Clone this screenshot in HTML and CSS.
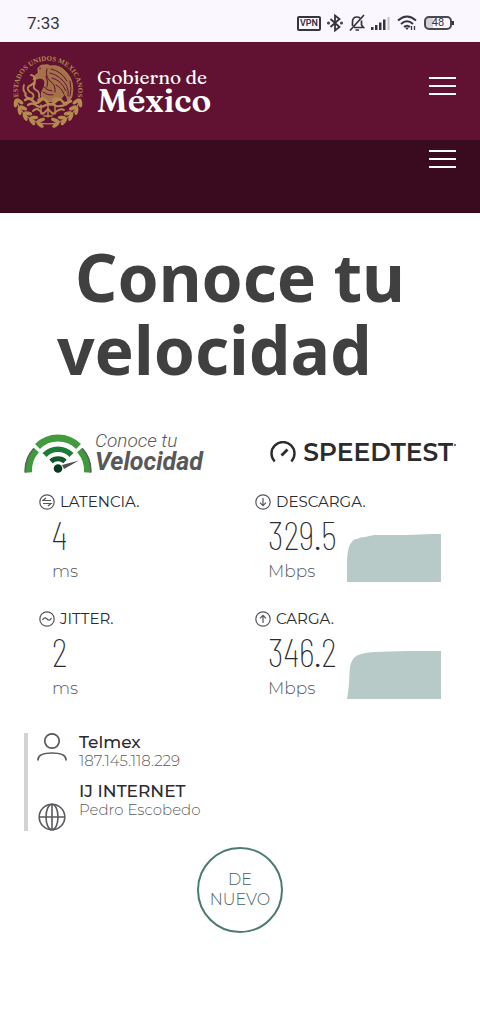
FILE: index.html
```html
<!DOCTYPE html>
<html lang="es">
<head>
<meta charset="utf-8">
<meta name="viewport" content="width=device-width, initial-scale=1">
<title>Conoce tu velocidad</title>
<link rel="stylesheet" href="styles.css">
</head>
<body>
<div class="status">
  <span class="clock">7:33</span>
  <div class="status-icons">
    <span class="vpn">VPN</span>
    <svg width="16" height="18" viewBox="0 0 16 18" fill="none" stroke="#37343b" stroke-width="1.8"><path d="M3.500 5l9 8L8 16.500V1.500L12.500 5l-9 8"/><circle cx="1.500" cy="9" r=".6"/><circle cx="14.500" cy="9" r=".6"/></svg>
    <svg width="16" height="18" viewBox="0 0 16 18" fill="none" stroke="#37343b" stroke-width="1.700"><path d="M15 1L1 16.500M3.500 12V8c0-3 1.500-5 4.500-5 1.200 0 2.200.4 3 1M12.500 6.500V11l2 2.500H5M6.500 16h3.500"/></svg>
    <svg width="20" height="14" viewBox="0 0 20 14" fill="#37343b"><rect x="0" y="11" width="2.500" height="3"/><rect x="4" y="9" width="2.500" height="5"/><rect x="8" y="6.500" width="2.500" height="7.500"/><rect x="12" y="3.500" width="2.500" height="10.500"/><rect x="16.500" y="1" width="2" height="13" fill="#c4c0c8"/></svg>
    <svg width="20" height="16" viewBox="0 0 20 16" fill="none" stroke="#37343b" stroke-width="2"><path d="M1 5.500Q10-2.500 19 5.500M4 9q6-5.500 12 0M7 12q3-2.500 6 0"/><path d="M8 12.500h4L10 15z" fill="#37343b" stroke="none"/><path d="M14.500 11v4M17.500 11v4" stroke-width="1.300"/></svg>
    <span class="battery">48</span>
  </div>
</div>

<header class="gov">
  <a class="brand" href="#">
    <svg class="seal" width="74" height="74" viewBox="0 0 74 74" fill="none" stroke="#b58a50" stroke-linecap="round">
      <defs>
        <path id="ring" d="M7.900 44A30 30 0 1 1 66.100 44"/>
        <g id="sprig" fill="#b58a50" stroke="none"><ellipse cx="35" cy="67" rx="4.300" ry="1.900" transform="rotate(-28 35 67)"/><ellipse cx="35" cy="71.500" rx="4.300" ry="1.900" transform="rotate(28 35 71.500)"/></g>
      </defs>
      <text class="seal-text"><textPath href="#ring" startOffset="50%" text-anchor="middle">ESTADOS UNIDOS MEXICANOS</textPath></text>
      <path d="M5 45A33 33 0 0 0 69 45" stroke-width="1.200"/>
      <use href="#sprig" transform="rotate(10 37 37)"/><use href="#sprig" transform="rotate(24 37 37)"/><use href="#sprig" transform="rotate(38 37 37)"/><use href="#sprig" transform="rotate(52 37 37)"/><use href="#sprig" transform="rotate(66 37 37)"/>
      <g transform="translate(74 0) scale(-1 1)"><use href="#sprig" transform="rotate(10 37 37)"/><use href="#sprig" transform="rotate(24 37 37)"/><use href="#sprig" transform="rotate(38 37 37)"/><use href="#sprig" transform="rotate(52 37 37)"/><use href="#sprig" transform="rotate(66 37 37)"/></g>
      <g stroke-width="1.300">
        <path d="M27 14q3-4 7-3 3-1 5 1 10-2 17 7 8 9 5 23-1 4-4 5-1-5-4-7-2 6-8 7-8 2-13-2-3-3-1-8 3-4 3-9-1-4-5-4l-7 2q0-4 5-7z" fill="#b58a50" fill-opacity=".8" stroke-width=".8"/>
        <path d="M36 15q-2 7 3 12 6 4 5 11M40 15q10 2 16 12M39 19q10 2 17 13M41 24q9 2 14 13M45 31q5 2 8 9M59 27q2 8 0 15M56 33q2 4 1 9M33 33q4 4 8 4M32 38q5 4 10 3M35 22q3 6 1 11" stroke="#611232" stroke-width="1"/>
        <circle cx="29" cy="14.500" r=".8" fill="#611232" stroke="none"/>
        <path d="M20 21q5 1 4 6-2 4-6 5-3 3 1 6 5 2 3 6-5 2-8-3M24 29q-3 5 1 7 4 2 3 7M13 31q-2 5 2 9M27 46q3-3 6-1M42 46q3-3 6 0" stroke-width="1.800"/>
        <path d="M14 46q5-3 8 1t7 0 7 1 8 0 7-1 9 0" stroke-width="2.600"/>
        <path d="M17 51q5-3 9 1 4 2 9-1 6-2 10 1 5 1 11-2" stroke-width="2.200"/>
        <path d="M22 57q4-4 7 0l3 3 5-5 5 5 4-3q4-3 7-1" stroke-width="1.900"/>
        <path d="M30 51v9M37 49v14M44 51v9M33 62h8" stroke-width="1.500"/>
      </g>
    </svg>
    <span class="brand-name"><span class="brand-top">Gobierno de</span><span class="brand-main">México</span></span>
  </a>
  <button class="menu" aria-label="Menú principal"><i></i><i></i><i></i></button>
</header>
<nav class="subnav"><button class="menu" aria-label="Menú secundario"><i></i><i></i><i></i></button></nav>

<main>
  <h1>Conoce tu<br>velocidad&nbsp;&nbsp;&nbsp;</h1>

  <div class="logos">
    <div class="logo-cv">
      <svg width="68" height="40" viewBox="0 -2 68 40" fill="none">
        <path d="M4.500 37.500A30.500 30.500 0 0 1 12.300 15M55.700 15A30.500 30.500 0 0 1 63.500 37.500" stroke="#3f9a3c" stroke-width="7"/>
        <path d="M1.200 37.500A33 33 0 0 1 9.800 13.500M58.300 13.500A33 33 0 0 1 66.800 37.500" stroke="#5c625a" stroke-width="1.600"/>
        <path d="M13.500 11.500A29 29 0 0 1 54.500 11.500" stroke="#439b3f" stroke-width="7"/>
        <path d="M20.500 20A18.500 18.500 0 0 1 47.500 20" stroke="#1d7c36" stroke-width="5.500"/>
        <path d="M27 26.500A10.500 10.500 0 0 1 41 26.500" stroke="#12562b" stroke-width="5"/>
        <circle cx="34" cy="33.500" r="4.300" fill="#063b20"/>
        <path d="M38 30L55 25.500 40 34z" fill="#554e54"/>
      </svg>
      <span class="cv-name"><span class="cv-top">Conoce tu</span><span class="cv-main">Velocidad</span></span>
    </div>
    <div class="logo-st">
      <svg width="26" height="22" viewBox="0 0 26 22" fill="none" stroke="#2b2b2b" stroke-width="2.400"><path d="M4.700 20.500A11.500 11.500 0 1 1 21.300 20.500"/><path d="M11.500 14.500L17.500 8.500" stroke-width="2.800"/></svg>
      <span>SPEEDTEST</span><i class="mark"></i>
    </div>
  </div>

  <div class="metrics">
    <section class="metric">
      <h2><svg class="ico" viewBox="0 0 16 16"><circle cx="8" cy="8" r="7.200"/><path d="M12 6.500H4L7 4M4 9.500h8L9 12"/></svg>LATENCIA.</h2>
      <div class="reading"><div><div class="value">4</div><div class="unit">ms</div></div></div>
    </section>
    <section class="metric">
      <h2><svg class="ico" viewBox="0 0 16 16"><circle cx="8" cy="8" r="7.200"/><path d="M8 4v7.500M5 8.700l3 3 3-3"/></svg>DESCARGA.</h2>
      <div class="reading"><div><div class="value">329.5</div><div class="unit">Mbps</div></div>
      <svg class="chart" viewBox="0 0 94 48" preserveAspectRatio="none"><path d="M0 48V26Q1 10 5 8 6 5 10 5 13 3 18 3L27 1 60 1 85 0H94V48z"/></svg></div>
    </section>
    <section class="metric">
      <h2><svg class="ico" viewBox="0 0 16 16"><circle cx="8" cy="8" r="7.200"/><path d="M3.500 9c1.500-3 3-2.500 4.500-1s3 2 4.500-1"/></svg>JITTER.</h2>
      <div class="reading"><div><div class="value">2</div><div class="unit">ms</div></div></div>
    </section>
    <section class="metric">
      <h2><svg class="ico" viewBox="0 0 16 16"><circle cx="8" cy="8" r="7.200"/><path d="M8 12V4.500M5 7.300l3-3 3 3"/></svg>CARGA.</h2>
      <div class="reading"><div><div class="value">346.2</div><div class="unit">Mbps</div></div>
      <svg class="chart" viewBox="0 0 94 48" preserveAspectRatio="none"><path d="M0 48Q2 38 2.500 22 3 8 10 4.500 17 1 35 .8L60 0H94V48z"/></svg></div>
    </section>
  </div>

  <div class="network">
    <div class="party">
      <svg width="30" height="30" viewBox="0 0 30 30" fill="none" stroke="#5a5a5e" stroke-width="1.700"><circle cx="15" cy="8" r="7.200"/><path d="M1 27.500v-1.500q1-6 14-6t14 6v1.500"/></svg>
      <div><div class="name">Telmex</div><div class="detail">187.145.118.229</div></div>
    </div>
    <div class="party server">
      <svg width="30" height="28" viewBox="0 0 30 28" fill="none" stroke="#5a5a5e" stroke-width="1.600"><circle cx="15" cy="14" r="12.800"/><ellipse cx="15" cy="14" rx="6" ry="12.800"/><path d="M2 14h26M15 1v26"/></svg>
      <div><div class="name">IJ INTERNET</div><div class="detail">Pedro Escobedo</div></div>
    </div>
  </div>

  <button class="again">DE NUEVO</button>
</main>
</body>
</html>
```
FILE: styles.css
```css
* { box-sizing: border-box; }
body { margin: 0; background: #fff; color: #2b2b2e; font-family: Montserrat, Inter, sans-serif; }
svg { display: block; flex: none; }
button { font: inherit; cursor: pointer; }

.status { display: flex; align-items: center; justify-content: space-between; height: 42px; padding: 4px 26px 0 27px; background: #faf7ff; color: #37343b; font-family: Roboto, sans-serif; }
.clock { font-size: 17px; }
.status-icons { display: flex; align-items: center; gap: 6px; }
.vpn { width: 24px; border: 2px solid #37343b; border-radius: 2px; font-size: 9px; font-weight: 600; line-height: 11px; text-align: center; }
.battery { position: relative; width: 28px; margin: 0 2px 0 1px; border: 2px solid #4a474e; border-radius: 5px; background: linear-gradient(90deg, #d5d1d9 30%, #faf7ff 30%); font-size: 11px; line-height: 10px; text-align: center; }
.battery::after { content: ""; position: absolute; right: -4px; top: 3px; width: 2px; height: 4px; background: #37343b; }

.gov { display: flex; align-items: center; justify-content: space-between; height: 98px; padding: 0 24px 0 11px; background: #611232; }
.brand { display: flex; align-items: center; gap: 12px; color: #fff; text-decoration: none; }
.seal-text { font: bold 7px "Liberation Serif", serif; fill: #b58a50; stroke: none; }
.brand-name { display: flex; flex-direction: column; }
.brand-top { font: 500 19px/18px Fraunces, "DejaVu Serif", serif; }
.brand-main { font: 600 33px/28px Fraunces, "Liberation Serif", serif; }
.menu { display: flex; flex-direction: column; gap: 6px; width: 27px; padding: 0; border: 0; background: none; }
.gov .menu { margin-bottom: 10px; }
.menu i { height: 2px; width: 100%; background: #fff; }
.subnav { display: flex; justify-content: flex-end; height: 73px; padding: 10px 24px; background: #3a0a1e; }
.subnav .menu { height: 18px; }

main { display: flex; flex-direction: column; padding: 27px 24px; }
h1 { margin: 0; color: #404041; font: bold 66px/73px "Noto Sans", "Open Sans", sans-serif; text-align: center; }

.logos { display: flex; justify-content: space-between; align-items: center; margin-top: 45px; height: 42px; }
.logo-cv { display: flex; align-items: flex-end; gap: 3px; }
.cv-name { display: flex; flex-direction: column; color: #58585a; font-family: Roboto, sans-serif; font-style: italic; }
.cv-top { font-size: 19px; line-height: 20px; font-weight: 300; }
.cv-main { font-size: 25px; line-height: 22px; font-weight: 700; }
.logo-st { display: flex; align-items: center; gap: 7px; font-size: 25px; line-height: 28px; font-weight: 600; }
.mark { width: 2px; height: 2px; margin: -14px 0 0 -6px; background: #777; }

.metrics { display: grid; grid-template-columns: 1fr 1fr; margin-top: 17px; row-gap: 23px; }
.metric { padding-left: 15px; }
.metric h2 { display: flex; align-items: center; gap: 5px; margin: 0; font-size: 15px; line-height: 24px; font-weight: 400; }
.ico { width: 16px; height: 16px; fill: none; stroke: #55555a; stroke-width: 1.2; }
.reading { display: flex; align-items: flex-end; justify-content: space-between; padding: 0 15px 0 13px; }
.value { font: 200 40px/40px "Barlow Condensed", "Roboto Condensed", Roboto, sans-serif; }
.unit { margin-top: 4px; color: #5c5c60; font-size: 17px; line-height: 26px; font-weight: 300; }
.chart { width: 94px; height: 48px; margin-bottom: 2px; fill: #b7cac8; }

.network { display: flex; flex-direction: column; gap: 12px; margin-top: 32px; padding-left: 9px; border-left: 4px solid #d3d3d4; }
.party { display: flex; gap: 12px; align-items: flex-start; }
.server { align-items: flex-end; }
.server > div { padding-bottom: 12px; }
.name { font-size: 17px; line-height: 19px; font-weight: 500; }
.detail { color: #5c5c60; font-size: 15px; line-height: 18px; font-weight: 300; }

.again { align-self: center; width: 86px; height: 86px; margin-top: 16px; padding: 0 8px; border: 2px solid #4c7a73; border-radius: 50%; background: #fff; color: #46625d; font-size: 16px; line-height: 20px; font-weight: 300; }
```
